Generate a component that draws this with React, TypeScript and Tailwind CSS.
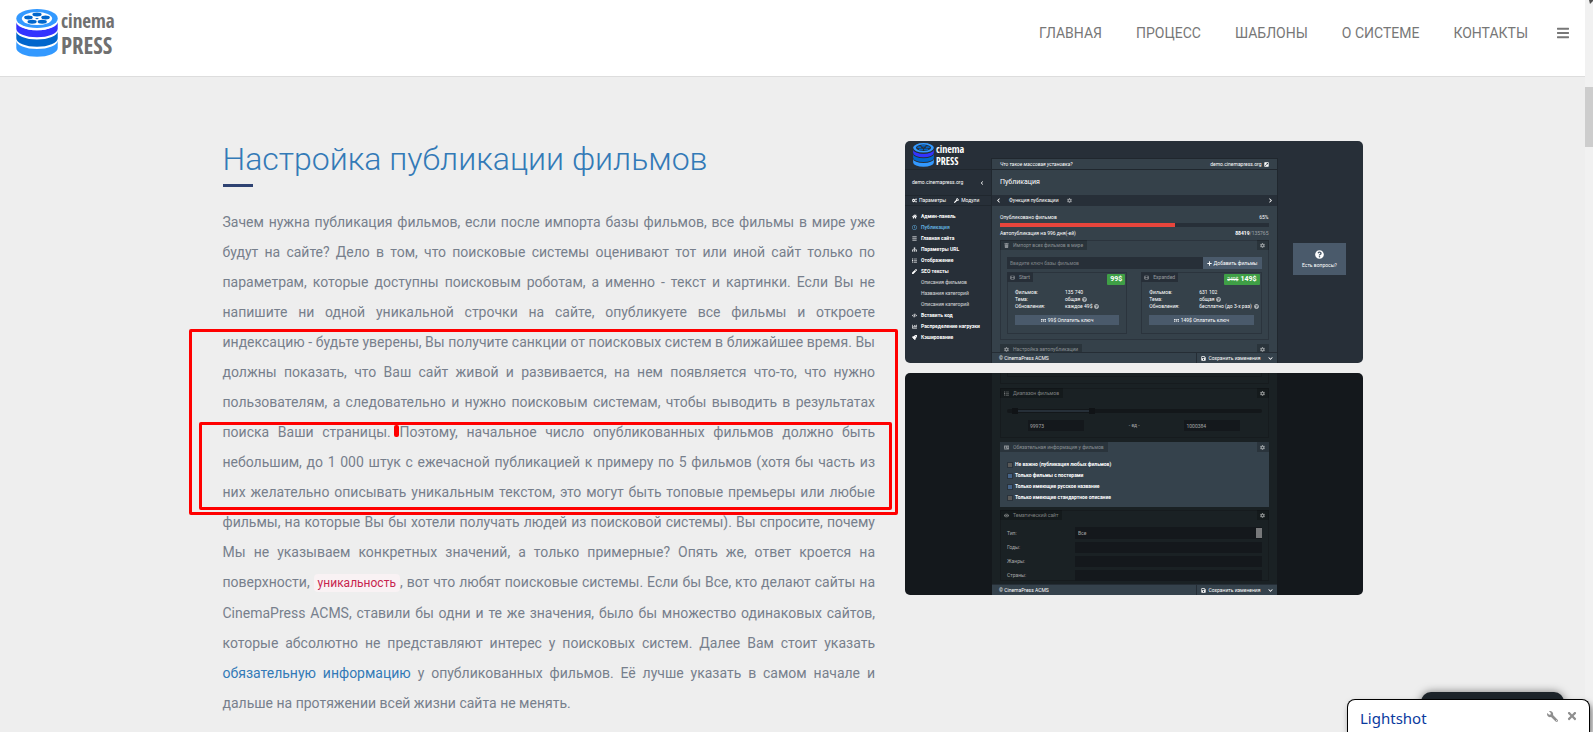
import type { ReactNode } from "react";
import {
  FaBars, FaCogs, FaWrench, FaHome, FaSitemap, FaList, FaPen, FaCode, FaChartBar, FaRocket,
  FaChevronLeft, FaChevronRight, FaChevronDown, FaTrash, FaFilm, FaPlus, FaQuestionCircle,
  FaSave, FaCog, FaExternalLinkSquareAlt, FaRegMoneyBillAlt, FaAddressCard, FaEye, FaTimes, FaRegClock,
} from "react-icons/fa";

const navItems = ["ГЛАВНАЯ", "ПРОЦЕСС", "ШАБЛОНЫ", "О СИСТЕМЕ", "КОНТАКТЫ"];

const lines: ReactNode[] = [
  "Зачем нужна публикация фильмов, если после импорта базы фильмов, все фильмы в мире уже",
  "будут на сайте? Дело в том, что поисковые системы оценивают тот или иной сайт только по",
  "параметрам, которые доступны поисковым роботам, а именно - текст и картинки. Если Вы не",
  "напишите ни одной уникальной строчки на сайте, опубликуете все фильмы и откроете",
  "индексацию - будьте уверены, Вы получите санкции от поисковых систем в ближайшее время. Вы",
  "должны показать, что Ваш сайт живой и развивается, на нем появляется что-то, что нужно",
  "пользователям, а следовательно и нужно поисковым системам, чтобы выводить в результатах",
  "поиска Ваши страницы. Поэтому, начальное число опубликованных фильмов должно быть",
  "небольшим, до 1 000 штук с ежечасной публикацией к примеру по 5 фильмов (хотя бы часть из",
  "них желательно описывать уникальным текстом, это могут быть топовые премьеры или любые",
  "фильмы, на которые Вы бы хотели получать людей из поисковой системы). Вы спросите, почему",
  "Мы не указываем конкретных значений, а только примерные? Опять же, ответ кроется на",
  <>
    поверхности, <code className="rounded bg-[#f9f2f4] px-1 py-[2px] font-['Roboto',sans-serif] text-[12px] text-[#c7254e]">уникальность</code>, вот что любят поисковые системы. Если бы Все, кто делают сайты на
  </>,
  "CinemaPress ACMS, ставили бы одни и те же значения, было бы множество одинаковых сайтов,",
  "которые абсолютно не представляют интерес у поисковых систем. Далее Вам стоит указать",
  <>
    <a href="#required" className="text-[#337ab7]">обязательную информацию</a> у опубликованных фильмов. Её лучше указать в самом начале и
  </>,
];

function Reel({ gap, className }: { gap: string; className: string }) {
  return (
    <svg viewBox="0 0 126 146" className={className} aria-hidden="true">
      <path d="M0 96A63 26 0 0 0 126 96V119A63 26 0 0 1 0 119Z" fill="#3399ff" />
      <path d="M0 67A63 26 0 0 0 126 67V89A63 26 0 0 1 0 89Z" fill="#0066cc" />
      <path d="M0 39A63 26 0 0 0 126 39V60A63 26 0 0 1 0 60Z" fill="#3333ff" />
      <ellipse cx="63" cy="30" rx="65" ry="35" fill={gap} />
      <ellipse cx="63" cy="29" rx="63" ry="29" fill="#3399ff" />
      <ellipse cx="63" cy="29" rx="46" ry="20" fill={gap} />
      <g fill="#0066cc">
        <ellipse cx="63" cy="17" rx="14" ry="6" />
        <ellipse cx="37" cy="26" rx="13" ry="6" />
        <ellipse cx="89" cy="26" rx="13" ry="6" />
        <ellipse cx="48" cy="39" rx="14" ry="6" />
        <ellipse cx="79" cy="39" rx="14" ry="6" />
        <ellipse cx="63" cy="29" rx="5" ry="2" />
      </g>
    </svg>
  );
}

function Tag({ icon, children }: { icon: ReactNode; children: ReactNode }) {
  return (
    <div className="flex h-[10px] justify-between">
      <span className="flex items-center gap-1 bg-black/20 px-1 text-white/45">
        {icon}
        {children}
      </span>
      <span className="flex w-3 items-center justify-center bg-black/20 text-white/50">
        <FaCog />
      </span>
    </div>
  );
}

function PanelFooter() {
  return (
    <div className="flex h-[11px] shrink-0 items-center border-t border-[#252d35] bg-[#35424c] pl-[7px] text-white">
      <span className="grow">© CinemaPress ACMS</span>
      <button className="flex h-full items-center gap-[2px] border-l border-[#252d35] px-1">
        <FaSave />
        Сохранить изменения
      </button>
      <button className="flex h-full w-3 items-center justify-center" aria-label="Ещё">
        <FaChevronDown />
      </button>
    </div>
  );
}

const menu = [
  { icon: <FaHome />, label: "Админ-панель" },
  { icon: <FaRegClock />, label: "Публикация", active: true },
  { icon: <FaBars />, label: "Главная сайта" },
  { icon: <FaSitemap />, label: "Параметры URL" },
  { icon: <FaList />, label: "Отображение" },
  { icon: <FaPen />, label: "SEO тексты" },
  { label: "Описания фильмов" },
  { label: "Названия категорий" },
  { label: "Описания категорий" },
  { icon: <FaCode />, label: "Вставить код" },
  { icon: <FaChartBar />, label: "Распределение нагрузки" },
  { icon: <FaRocket />, label: "Кэширование" },
];

const plans = [
  { name: "Start", old: "", price: "99$", films: "135 740", update: "каждое 49$", pay: "99$ Оплатить ключ" },
  { name: "Expanded", old: "249$", price: "149$", films: "631 102", update: "бесплатно (до 3-х раз)", pay: "149$ Оплатить ключ" },
];

function PublishPanel() {
  return (
    <div className="flex h-[222px] overflow-hidden rounded-[5px] bg-[#272f38] font-['Roboto',sans-serif] text-[5px] leading-none whitespace-nowrap text-white">
      <div className="w-[87px] shrink-0">
        <div className="flex h-[29px] items-center gap-[2px] border-b border-[#20272e] pl-2">
          <Reel gap="#272f38" className="h-6 w-[21px]" />
          <div className="font-['Open_Sans_Condensed','Roboto_Condensed',sans-serif] text-[10px] leading-[12px] font-bold">
            <div>cinema</div>
            <div>PRESS</div>
          </div>
        </div>
        <div className="flex h-[25px] items-center justify-between pr-2 pl-[7px]">
          <span>demo.cinemapress.org</span>
          <FaChevronLeft className="h-1 w-1" />
        </div>
        <div className="flex h-[11px] items-center gap-2 border-y border-[#20272e] pl-[7px]">
          <span className="flex items-center gap-[2px]"><FaCogs />Параметры</span>
          <span className="flex items-center gap-[2px]"><FaWrench />Модули</span>
        </div>
        <ul className="pt-[5px]">
          {menu.map((m) => (
            <li
              key={m.label}
              className={`flex h-[11px] items-center gap-[3px] pl-[7px] ${m.active ? "text-[#5fa8d8]" : ""} ${m.icon ? "font-bold" : "text-white/80"}`}
            >
              <span className="w-[6px]">{m.icon}</span>
              {m.label}
            </li>
          ))}
        </ul>
      </div>
      <div className="flex min-w-0 grow flex-col pt-[18px]">
        <div className="flex grow flex-col bg-[#35414a] shadow-[0_0_0_1px_#20272e]">
          <div className="flex h-[11px] shrink-0 items-center justify-between border-b border-[#20272e] px-2">
            <em>Что такое массовая установка?</em>
            <span className="flex items-center gap-[2px]">demo.cinemapress.org <FaExternalLinkSquareAlt /></span>
          </div>
          <div className="flex h-[25px] shrink-0 items-center px-2 text-[7px]">Публикация</div>
          <div className="flex h-[11px] shrink-0 items-center gap-2 bg-[#272f38] px-1">
            <FaChevronLeft />
            <span>Функция публикации</span>
            <FaCog className="text-white/50" />
            <FaChevronRight className="ml-auto" />
          </div>
          <div className="grow px-2 pt-[6px]">
            <div className="flex h-[10px] items-center justify-between"><span>Опубликовано фильмов</span><span>65%</span></div>
            <div className="mt-px h-1 bg-[#272f38]"><div className="h-full w-[65%] bg-[#e8453c]" /></div>
            <div className="flex h-3 items-center justify-between">
              <span>Автопубликация на 996 дня(-ей)</span>
              <span><b>88419</b><span className="text-white/50">/135765</span></span>
            </div>
            <div className="mt-px h-[100px] shadow-[inset_0_0_0_1px_#2b343d]">
              <Tag icon={<FaTrash />}>Импорт всех фильмов в мире</Tag>
              <div className="px-[7px] pt-[7px]">
                <div className="flex h-3">
                  <input
                    className="min-w-0 grow bg-[#272f38] px-[3px] placeholder:text-white/40"
                    placeholder="Введите ключ базы фильмов"
                    aria-label="Ключ базы фильмов"
                  />
                  <button className="flex items-center gap-[2px] bg-[#4a5a6b] px-1"><FaPlus />Добавить фильмы</button>
                </div>
                <div className="mt-[3px] flex gap-[14px]">
                  {plans.map((p) => (
                    <div key={p.name} className="h-[62px] min-w-0 flex-1 shadow-[inset_0_0_0_1px_#2b343d]">
                      <div className="flex items-start justify-between">
                        <span className="flex h-[10px] items-center gap-1 bg-[#272f38] px-[3px] text-white/50"><FaFilm />{p.name}</span>
                        <span className="mt-[2px] mr-[2px] flex h-[11px] items-center gap-[2px] rounded-[1px] bg-[#3f9f46] px-[3px]">
                          {p.old && <s>{p.old}</s>}
                          <b className="text-[7px]">{p.price}</b>
                        </span>
                      </div>
                      <div className="grid grid-cols-[50px_1fr] pt-1 pl-2 leading-[7px]">
                        <span>Фильмов:</span><span>{p.films}</span>
                        <span>Тема:</span><span className="flex items-center gap-[2px]">общая <FaQuestionCircle className="text-white/60" /></span>
                        <span>Обновления:</span><span className="flex items-center gap-[2px]">{p.update} <FaQuestionCircle className="text-white/60" /></span>
                      </div>
                      <div className="px-2 pt-[5px]">
                        <button className="flex h-[10px] w-full items-center justify-center gap-[2px] bg-[#4a5a6b]"><FaRegMoneyBillAlt />{p.pay}</button>
                      </div>
                    </div>
                  ))}
                </div>
              </div>
            </div>
            <div className="mt-1 h-2 overflow-hidden"><Tag icon={<FaCog />}>Настройка автопубликации</Tag></div>
          </div>
          <PanelFooter />
        </div>
      </div>
      <div className="flex w-[86px] shrink-0 items-start justify-center pt-[102px]">
        <button className="flex h-8 w-[53px] flex-col items-center justify-center gap-1 bg-[#4a5a6b]">
          <FaQuestionCircle className="h-[9px] w-[9px]" />
          Есть вопросы?
        </button>
      </div>
    </div>
  );
}

const requirements = [
  { label: "Не важно (публикация любых фильмов)", on: false },
  { label: "Только фильмы с постерами", on: true },
  { label: "Только имеющие русское название", on: true },
  { label: "Только имеющие стандартное описание", on: false },
];

function RequirementsPanel() {
  return (
    <div className="flex h-[222px] overflow-hidden rounded-[5px] bg-[#14181c] font-['Roboto',sans-serif] text-[5px] leading-none whitespace-nowrap text-white/60">
      <div className="w-[87px] shrink-0" />
      <div className="flex min-w-0 grow flex-col bg-[#1a2124]">
        <div className="grow px-2">
          <div className="h-[11px] border-x border-b border-[#161b1e] px-[6px]"><div className="h-1 border-x border-b border-[#161b1e]" /></div>
          <div className="mt-1 h-[50px] shadow-[inset_0_0_0_1px_#161b1e]">
            <Tag icon={<FaList />}>Диапазон фильмов</Tag>
            <div className="px-[7px] pt-[11px]">
              <div className="flex h-1 items-center rounded-sm bg-[#13171a]">
                <span className="ml-[5px] h-[6px] w-[6px] bg-[#101316]" />
                <span className="h-[2px] w-[71px] bg-[#262f38]" />
                <span className="h-[6px] w-[6px] bg-[#101316]" />
              </div>
              <div className="mt-[7px] flex items-center justify-between px-[21px]">
                <input className="h-[11px] w-14 bg-[#14181c] px-[2px]" defaultValue="99973" aria-label="От" />
                <span>- ед -</span>
                <input className="h-[11px] w-14 bg-[#14181c] px-[2px]" defaultValue="1000384" aria-label="До" />
              </div>
            </div>
          </div>
          <div className="mt-1 h-[65px] bg-[#35424c] text-white">
            <Tag icon={<FaAddressCard />}>Обязательная информация у фильмов</Tag>
            <div className="pt-[7px] pl-2 font-bold">
              {requirements.map((r) => (
                <label key={r.label} className="flex h-[11px] items-center gap-[3px]">
                  <input type="checkbox" defaultChecked={r.on} className="h-1 w-1 appearance-none bg-[#5b5a58] outline outline-[#2a333c] checked:bg-[#466488]" />
                  {r.label}
                </label>
              ))}
            </div>
          </div>
          <div className="mt-[3px] shadow-[inset_0_0_0_1px_#161b1e]">
            <Tag icon={<FaEye />}>Тематический сайт</Tag>
            <div className="flex flex-col gap-[3px] px-[7px] pt-[7px]">
              <label className="flex h-3 items-center">
                <span className="w-[68px]">Тип:</span>
                <span className="flex h-full grow items-center bg-[#14181c]">
                  <select className="h-full grow appearance-none bg-transparent px-[3px]"><option>Все</option></select>
                  <span className="h-[10px] w-[6px] bg-[#77787a]" />
                </span>
              </label>
              {["Годы:", "Жанры:", "Страны:"].map((l) => (
                <label key={l} className="flex h-[11px] items-center">
                  <span className="w-[68px]">{l}</span>
                  <input className="h-full min-w-0 grow bg-[#14181c]" />
                </label>
              ))}
            </div>
          </div>
        </div>
        <PanelFooter />
      </div>
      <div className="w-[86px] shrink-0" />
    </div>
  );
}

export default function App() {
  return (
    <div className="relative flex h-screen overflow-hidden bg-[#eeeeee] font-['Roboto',sans-serif]">
      <div className="min-w-0 grow">
        <header className="flex h-[77px] items-start justify-between border-b border-[#dddddd] bg-white px-4">
          <a href="#home" className="flex items-start gap-[3px] pt-[9px] text-[#707070]">
            <Reel gap="#ffffff" className="h-12 w-[42px]" />
            <span className="flex flex-col font-['Open_Sans_Condensed','Roboto_Condensed',sans-serif] leading-6 font-bold">
              <span className="text-[19px]">cinema</span>
              <span className="text-[23px]">PRESS</span>
            </span>
          </a>
          <div className="flex h-[66px] items-center gap-[29px] text-[#777777]">
            <nav className="flex items-center gap-[34px] text-[14px]">
              {navItems.map((n) => (
                <a key={n} href="#section">{n}</a>
              ))}
            </nav>
            <button aria-label="Меню"><FaBars className="h-[14px] w-3" /></button>
          </div>
        </header>

        <main className="mx-auto grid max-w-[1170px] grid-cols-12 gap-[30px] px-[15px] pt-16">
          <article className="relative col-span-7">
            <h2 className="text-[32px] leading-9 font-light whitespace-nowrap text-[#337ab7]">Настройка публикации фильмов</h2>
            <div className="mt-[7px] h-[3px] w-[30px] bg-[#2e4272]" />
            <p className="mt-5 text-[14px] leading-[30px] text-[#777f8c]">
              {lines.map((l, i) => (
                <span key={i} className="block whitespace-nowrap [text-align-last:justify]">{l} </span>
              ))}
              <span className="block">дальше на протяжении всей жизни сайта не менять.</span>
            </p>
            <div className="pointer-events-none absolute top-[188px] -right-[23px] -left-[34px] h-[186px] rounded-[2px] border-3 border-[#ff0000]" />
            <div className="pointer-events-none absolute top-[281px] -right-[17px] -left-6 h-[88px] rounded-[2px] border-3 border-[#ff0000]" />
            <div className="pointer-events-none absolute top-[284px] left-[171px] h-3 w-[5px] rounded-[2px] bg-[#ff0000]" />
          </article>
          <aside className="col-span-5 flex flex-col gap-[10px]">
            <PublishPanel />
            <RequirementsPanel />
          </aside>
        </main>
      </div>

      <div className="flex w-2 shrink-0 flex-col bg-[#f1f1f1]">
        <svg viewBox="0 0 8 4" className="h-1 w-2" aria-hidden="true"><path d="M4 0H8V1L5 4Z" fill="#505050" /></svg>
        <div className="mt-[83px] h-[60px] bg-[#cdcdcd]" />
      </div>

      <div className="absolute right-[29px] bottom-0 h-10 w-[143px] rounded-t-[10px] bg-[#1c2329] shadow-[0_0_8px_rgba(0,0,0,0.5)]" />
      <div className="absolute right-[3px] bottom-0 flex h-[33px] w-[243px] items-start rounded-t-lg border border-b-0 border-black bg-white pl-3 shadow-[2px_4px_6px_rgba(0,0,0,0.5)]">
        <a href="#lightshot" className="grow font-['Noto_Sans',sans-serif] text-[15px] leading-9 text-[#0a3a9e]">Lightshot</a>
        <div className="flex gap-2 pt-[10px] pr-[11px] text-[#8f8f8f]">
          <button aria-label="Настройки"><FaWrench className="h-[11px] w-[11px] -scale-x-100" /></button>
          <button aria-label="Закрыть"><FaTimes className="h-3 w-3" /></button>
        </div>
      </div>
    </div>
  );
}
